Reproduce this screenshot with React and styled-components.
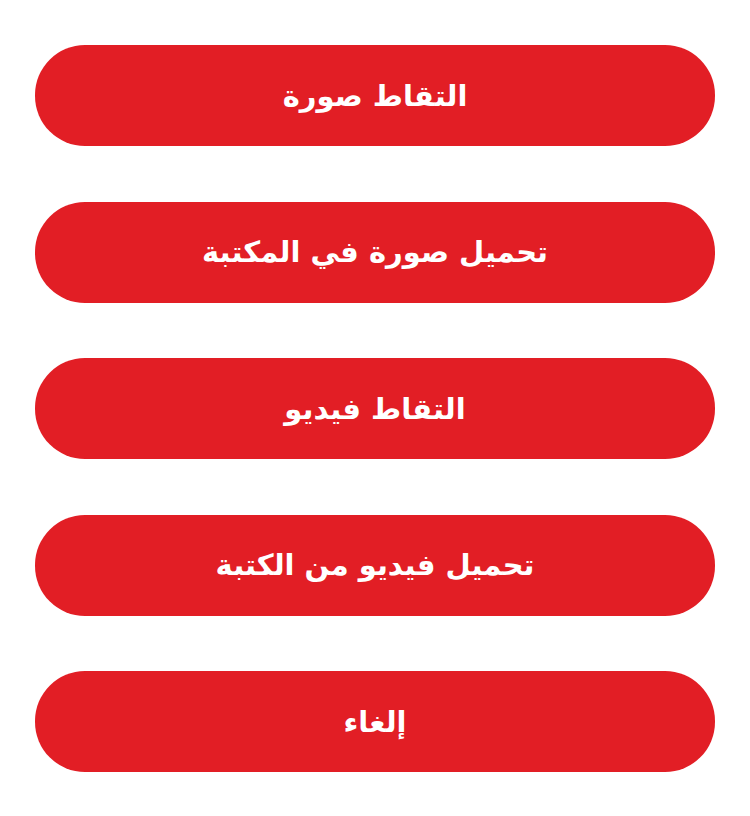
import React from "react";
import styled, { createGlobalStyle } from "styled-components";

const GlobalStyle = createGlobalStyle`
  body {
    margin: 0;
    background: #ffffff;
  }
`;

const Sheet = styled.div`
  display: flex;
  flex-direction: column;
  gap: 55.5px;
  padding: 45px 35px;
  direction: rtl;
`;

const ActionButton = styled.button`
  height: 101px;
  width: 100%;
  border: none;
  border-radius: 50px;
  background: #e21e25;
  color: #ffffff;
  font-family: "DejaVu Sans", "Noto Sans", sans-serif;
  font-weight: bold;
  font-size: 29px;
  display: flex;
  align-items: center;
  justify-content: center;
  padding: 0;
  cursor: pointer;
`;

const actions = [
  "التقاط صورة",
  "تحميل صورة في المكتبة",
  "التقاط فيديو",
  "تحميل فيديو من الكتبة",
  "إلغاء",
];

const App = () => {
  return (
    <>
      <GlobalStyle />
      <Sheet>
        {actions.map((label) => (
          <ActionButton key={label}>{label}</ActionButton>
        ))}
      </Sheet>
    </>
  );
};

export default App;
